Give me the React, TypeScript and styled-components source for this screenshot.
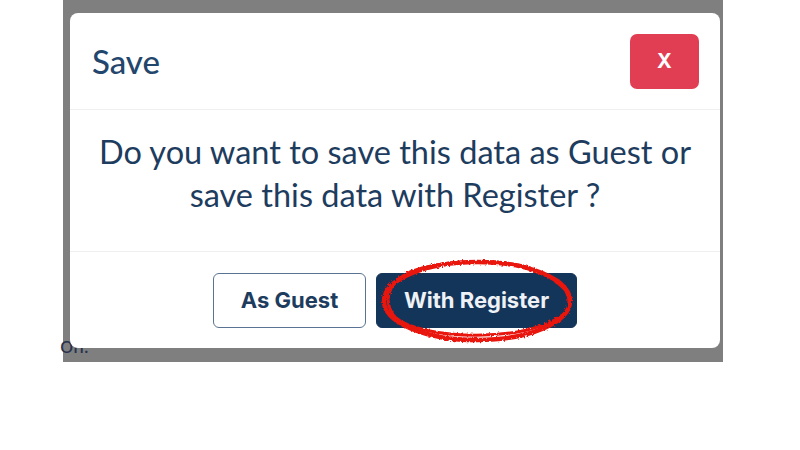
import * as React from 'react';
import styled, { createGlobalStyle } from 'styled-components';

const GlobalStyle = createGlobalStyle`
  html, body {
    margin: 0;
    padding: 0;
    background: #ffffff;
  }
  body {
    font-family: 'Lato', 'Noto Sans', sans-serif;
  }
`;

const Page = styled.div`
  width: 800px;
  height: 450px;
  position: relative;
  overflow: hidden;
`;

const Backdrop = styled.div`
  position: relative;
  margin-left: 63px;
  width: 660px;
  height: 362px;
  box-sizing: border-box;
  padding: 13px 3px 0 7px;
  background: #7f7f7f;
`;

// text of the page under the overlay, partly hidden by the modal
const PeekText = styled.span`
  position: absolute;
  left: -3px;
  bottom: 4px;
  z-index: 0;
  font-family: 'Noto Sans', sans-serif;
  font-size: 17px;
  font-weight: 500;
  color: #26314d;
`;

const Modal = styled.div`
  position: relative;
  z-index: 1;
  width: 650px;
  height: 335px;
  background: #ffffff;
  border-radius: 8px;
  display: flex;
  flex-direction: column;
`;

const Header = styled.div`
  height: 96px;
  display: flex;
  align-items: center;
  justify-content: space-between;
  padding: 0 21px 0 22px;
  border-bottom: 1px solid #efefef;
`;

const Title = styled.h2`
  margin: 0;
  font-family: 'Lato', sans-serif;
  font-weight: 500;
  font-size: 33px;
  color: #23466c;
`;

const CloseButton = styled.button`
  width: 69px;
  height: 55px;
  border: none;
  border-radius: 7px;
  background: #e23e53;
  color: #ffffff;
  font-family: 'Inter', sans-serif;
  font-weight: 700;
  font-size: 20px;
  cursor: pointer;
`;

const Body = styled.div`
  height: 142px;
  box-sizing: border-box;
  padding: 20px 10px 0;
  border-bottom: 1px solid #efefef;
  text-align: center;
`;

const Message = styled.p`
  margin: 0;
  font-family: 'Lato', sans-serif;
  font-size: 32.5px;
  line-height: 43px;
  color: #1d3c5e;
`;

const Footer = styled.div`
  flex: 1;
  display: flex;
  align-items: center;
  justify-content: center;
  gap: 10px;
`;

const ActionButton = styled.button<{ $primary?: boolean }>`
  height: 55px;
  width: ${(p) => (p.$primary ? '201px' : '153px')};
  box-sizing: border-box;
  border-radius: 6px;
  border: 1.5px solid ${(p) => (p.$primary ? '#14355a' : '#5a7393')};
  background: ${(p) => (p.$primary ? '#14355a' : '#ffffff')};
  color: ${(p) => (p.$primary ? '#eef2f6' : '#1d3c5e')};
  font-family: 'Inter', sans-serif;
  font-weight: 700;
  font-size: 22px;
  cursor: pointer;
`;

const Highlight = styled.div`
  position: relative;
`;

const Scribble = styled.svg`
  position: absolute;
  left: 4px;
  top: -16px;
  width: 194px;
  height: 88px;
  pointer-events: none;
  overflow: visible;
`;

export default function App() {
  return (
    <>
      <GlobalStyle />
      <Page>
        <Backdrop>
          <PeekText>On:</PeekText>
          <Modal>
            <Header>
              <Title>Save</Title>
              <CloseButton>X</CloseButton>
            </Header>
            <Body>
              <Message>
                Do you want to save this data as Guest or
                <br />
                save this data with Register ?
              </Message>
            </Body>
            <Footer>
              <ActionButton>As Guest</ActionButton>
              <Highlight>
                <ActionButton $primary>With Register</ActionButton>
                <Scribble viewBox="0 0 194 88">
                  <defs>
                    <filter id="rough" x="-10%" y="-20%" width="120%" height="140%">
                      <feTurbulence type="fractalNoise" baseFrequency="0.45" numOctaves="2" seed="3" />
                      <feDisplacementMap in="SourceGraphic" scale="3.5" />
                    </filter>
                  </defs>
                  <g filter="url(#rough)" fill="none" stroke="#e8150f" strokeLinecap="round">
                    <ellipse cx="97" cy="44" rx="93" ry="39" strokeWidth="4.5" />
                    <path d="M150 11 C 120 1, 60 3, 30 15 C 8 25, 2 44, 15 60 C 40 83, 150 87, 185 56 C 193 46, 189 33, 176 25" strokeWidth="3" />
                  </g>
                </Scribble>
              </Highlight>
            </Footer>
          </Modal>
        </Backdrop>
      </Page>
    </>
  );
}
